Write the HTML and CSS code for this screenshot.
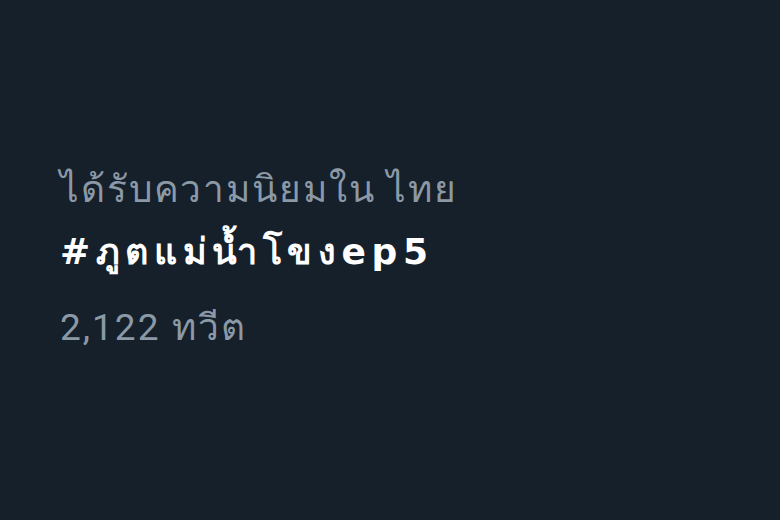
FILE: index.html
```html
<!DOCTYPE html>
<html lang="th">
<head>
    <meta charset="UTF-8">
    <meta name="viewport" content="width=device-width, initial-scale=1.0">
    <title>Trend</title>
    <link rel="stylesheet" href="styles.css">
</head>
<body>
    <div class="trend">
        <span class="trend-context">ได้รับความนิยมใน ไทย</span>
        <span class="trend-name">#ภูตแม่น้ำโขงep5</span>
        <span class="trend-count">2,122 ทวีต</span>
    </div>
</body>
</html>
```

FILE: styles.css
```css
* {
    margin: 0;
    padding: 0;
    box-sizing: border-box;
}
body {
    width: 780px;
    height: 520px;
    background: #15202b;
    font-family: Roboto, sans-serif;
    overflow: hidden;
}
.trend {
    display: flex;
    flex-direction: column;
    align-items: flex-start;
    padding: 159px 0 0 60px;
}
.trend-context {
    font-size: 37px;
    line-height: 62px;
    letter-spacing: 1.9px;
    color: #8b99a6;
}
.trend-name {
    font-family: "DejaVu Sans", sans-serif;
    font-size: 36px;
    line-height: 62px;
    font-weight: 700;
    letter-spacing: 5.6px;
    color: #fff;
}
.trend-count {
    margin-top: 14px;
    font-size: 37px;
    line-height: 62px;
    letter-spacing: 2px;
    color: #8b99a6;
}
```
